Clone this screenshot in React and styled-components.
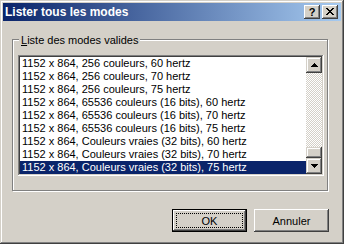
import React from 'react';
import styled, {createGlobalStyle} from 'styled-components';

const Global = createGlobalStyle`
    html, body {
        margin: 0;
        padding: 0;
        background: #d4d0c8;
    }
`;

const raised = `
    box-shadow: inset -1px -1px #404040, inset 1px 1px #fff, inset -2px -2px #808080, inset 2px 2px #d4d0c8;
`;

const Window = styled.div`
    width: 344px;
    height: 244px;
    box-sizing: border-box;
    padding: 3px;
    background: #d4d0c8;
    box-shadow: inset -1px -1px #404040, inset 1px 1px #d4d0c8, inset -2px -2px #808080, inset 2px 2px #fff;
    display: flex;
    flex-direction: column;
    font-family: "Liberation Sans", Arial, sans-serif;
    font-size: 11px;
    color: #000;
`;

const TitleBar = styled.div`
    height: 18px;
    display: flex;
    align-items: center;
    padding-left: 2px;
    padding-right: 3px;
    background: linear-gradient(to right, #0a246a, #a6caf0);
`;

const Title = styled.div`
    color: #fff;
    font-weight: bold;
    font-size: 12px;
    flex: 1;
    white-space: nowrap;
`;

const CaptionButton = styled.div`
    width: 16px;
    height: 14px;
    box-sizing: border-box;
    background: #d4d0c8;
    ${raised};
    display: flex;
    align-items: center;
    justify-content: center;
    margin-left: ${p => p.$gap || 0}px;
    font-weight: bold;
    font-size: 11px;
    line-height: 14px;
    padding-bottom: 1px;
`;

const Body = styled.div`
    flex: 1;
    display: flex;
    flex-direction: column;
    padding: 18px 12px 0 9px;
`;

const GroupBox = styled.div`
    position: relative;
    border: 1px solid #808080;
    box-shadow: inset 1px 1px #fff, 1px 1px #fff;
    margin-right: 1px;
    padding: 15px 3px 14px 5px;
`;

const Legend = styled.div`
    position: absolute;
    left: 6px;
    top: -6px;
    padding: 0 2px;
    background: #d4d0c8;
    line-height: 13px;
`;

const ListBox = styled.div`
    height: 121px;
    box-sizing: border-box;
    padding: 2px;
    background: #fff;
    box-shadow: inset -1px -1px #fff, inset 1px 1px #808080, inset -2px -2px #d4d0c8, inset 2px 2px #404040;
    display: flex;
`;

const Rows = styled.div`
    flex: 1;
    display: flex;
    flex-direction: column;
    overflow: hidden;
`;

const Row = styled.div`
    height: 13px;
    line-height: 13px;
    padding-left: 2px;
    white-space: nowrap;
    background: ${p => p.$selected ? '#0a246a' : 'transparent'};
    color: ${p => p.$selected ? '#fff' : '#000'};
`;

const ScrollBar = styled.div`
    width: 16px;
    display: flex;
    flex-direction: column;
`;

const ScrollButton = styled.div`
    width: 16px;
    height: 16px;
    box-sizing: border-box;
    background: #d4d0c8;
    box-shadow: inset -1px -1px #404040, inset 1px 1px #d4d0c8, inset -2px -2px #808080, inset 2px 2px #fff;
    display: flex;
    align-items: center;
    justify-content: center;
`;

const Track = styled.div`
    flex: 1;
    display: flex;
    flex-direction: column;
    justify-content: flex-end;
    background: repeating-conic-gradient(#fff 0 25%, #d4d0c8 0 50%) 0 0 / 2px 2px;
`;

const Thumb = styled.div`
    height: 11px;
    background: #d4d0c8;
    box-shadow: inset -1px -1px #404040, inset 1px 1px #d4d0c8, inset -2px -2px #808080, inset 2px 2px #fff;
`;

const ButtonRow = styled.div`
    display: flex;
    justify-content: flex-end;
    gap: 7px;
    margin-top: 18px;
`;

const Button = styled.div`
    position: relative;
    width: 75px;
    height: 23px;
    box-sizing: border-box;
    display: flex;
    align-items: center;
    justify-content: center;
    background: #d4d0c8;
    ${p => p.$default
        ? 'box-shadow: inset 0 0 0 1px #000, inset -2px -2px #404040, inset 2px 2px #fff, inset -3px -3px #808080;'
        : raised}
    &::after {
        content: '';
        display: ${p => p.$default ? 'block' : 'none'};
        position: absolute;
        inset: 4px;
        border: 1px dotted #000;
    }
`;

const Arrow = ({down}) => (
    <svg width="7" height="4" viewBox="0 0 7 4">
        <path d={down ? 'M0 0h7L3.5 4z' : 'M3.5 0L7 4H0z'} fill="#000" shapeRendering="crispEdges"/>
    </svg>
);

const modes = [
    '1152 x 864, 256 couleurs, 60 hertz',
    '1152 x 864, 256 couleurs, 70 hertz',
    '1152 x 864, 256 couleurs, 75 hertz',
    '1152 x 864, 65536 couleurs (16 bits), 60 hertz',
    '1152 x 864, 65536 couleurs (16 bits), 70 hertz',
    '1152 x 864, 65536 couleurs (16 bits), 75 hertz',
    '1152 x 864, Couleurs vraies (32 bits), 60 hertz',
    '1152 x 864, Couleurs vraies (32 bits), 70 hertz',
    '1152 x 864, Couleurs vraies (32 bits), 75 hertz',
];

const App = () => {
    return (
        <Window>
            <Global/>
            <TitleBar>
                <Title>Lister tous les modes</Title>
                <CaptionButton>?</CaptionButton>
                <CaptionButton $gap={2}>
                    <svg width="8" height="7" viewBox="0 0 8 7">
                        <path d="M0 0h2v1h1v1h2v-1h1v-1h2v1h-1v1h-1v1h-1v1h1v1h1v1h1v1h-2v-1h-1v-1h-2v1h-1v1h-2v-1h1v-1h1v-1h1v-1h-1v-1h-1v-1h-1z" fill="#000" shapeRendering="crispEdges"/>
                    </svg>
                </CaptionButton>
            </TitleBar>
            <Body>
                <GroupBox>
                    <Legend><u>L</u>iste des modes valides</Legend>
                    <ListBox>
                        <Rows>
                            {modes.map((m, i) => (
                                <Row key={m} $selected={i === modes.length - 1}>{m}</Row>
                            ))}
                        </Rows>
                        <ScrollBar>
                            <ScrollButton><Arrow/></ScrollButton>
                            <Track><Thumb/></Track>
                            <ScrollButton><Arrow down/></ScrollButton>
                        </ScrollBar>
                    </ListBox>
                </GroupBox>
                <ButtonRow>
                    <Button $default>OK</Button>
                    <Button>Annuler</Button>
                </ButtonRow>
            </Body>
        </Window>
    );
};

export default App;
